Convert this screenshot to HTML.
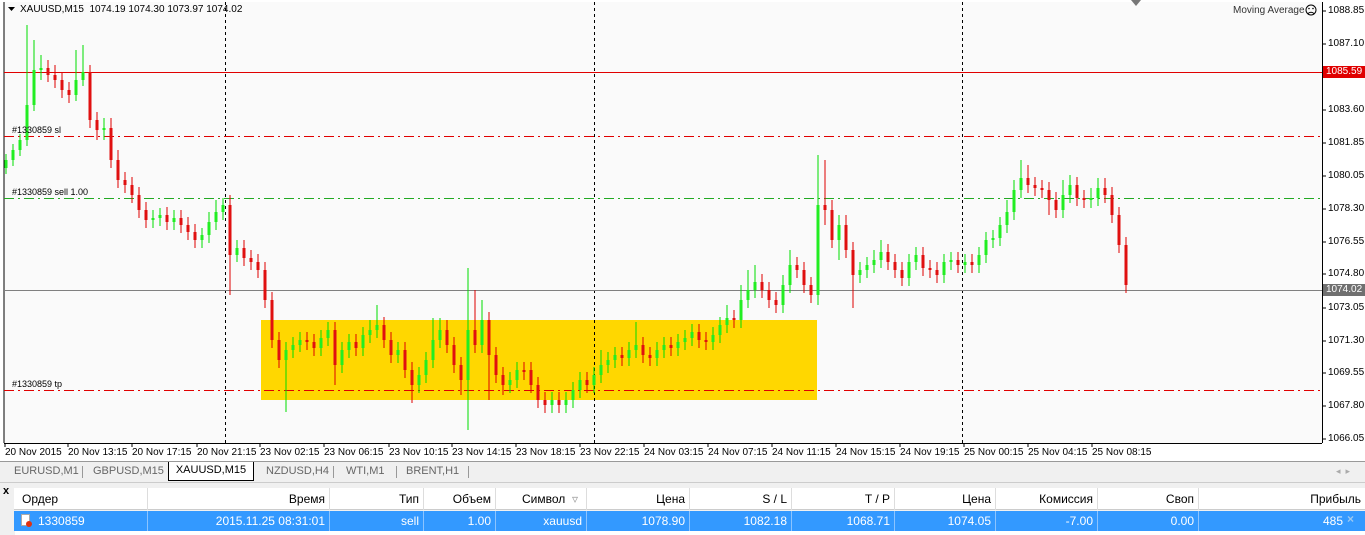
<!DOCTYPE html>
<html><head><meta charset="utf-8"><style>
body{margin:0;width:1365px;height:535px;overflow:hidden;background:#f0f0f0;font-family:"Liberation Sans",sans-serif;position:relative}
.a{position:absolute}
.pl{position:absolute;left:1328px;font-size:10px;color:#000;line-height:12px}
.tl{position:absolute;top:447px;font-size:10px;color:#000;white-space:nowrap}
.tab{position:absolute;top:463px;height:17px;font-size:11px;color:#666;line-height:17px}
.th{position:absolute;top:488px;height:22px;line-height:22px;font-size:12px;color:#000;text-align:right;border-right:1px solid #ddd;box-sizing:border-box;padding-right:4px}
.td{position:absolute;top:511px;height:20px;line-height:20px;font-size:12px;color:#fff;text-align:right;border-right:1px solid #8cc4ff;box-sizing:border-box;padding-right:4px}
</style></head><body>
<div class="a" style="left:0;top:0;width:1365px;height:461px;background:#fff"></div>
<svg class="a" style="left:0;top:0" width="1365" height="461">
<rect x="4" y="2" width="1318" height="441" fill="#fafafa"/>
<line x1="4" y1="2" x2="4" y2="443" stroke="#000"/>
<line x1="1322.5" y1="2" x2="1322.5" y2="443" stroke="#000"/>
<line x1="4" y1="443.5" x2="1322" y2="443.5" stroke="#000"/>
<rect x="261" y="320" width="556" height="80" fill="#ffd700"/>
<g stroke="#000" stroke-dasharray="3,3"><line x1="225.5" y1="2" x2="225.5" y2="443"/><line x1="594.5" y1="2" x2="594.5" y2="443"/><line x1="962.5" y1="2" x2="962.5" y2="443"/></g>
<line x1="4" y1="72.5" x2="1322" y2="72.5" stroke="#e00000"/>
<line x1="4" y1="290.5" x2="1322" y2="290.5" stroke="#808080"/>
<g stroke-dasharray="10,4,2,4"><line x1="4" y1="136.5" x2="1322" y2="136.5" stroke="#e00000"/><line x1="4" y1="390.5" x2="1322" y2="390.5" stroke="#e00000"/><line x1="4" y1="198.5" x2="1322" y2="198.5" stroke="#22aa22"/></g>
<path fill="none" stroke="#00dd00" stroke-width="1" d="M6 154V174 M13 144V166 M20 134V156 M27 25V146 M34 40V111 M41 55V80 M76 50V101 M83 45V86 M104 118V140 M153 210V228 M160 208V226 M174 210V230 M202 228V248 M209 212V243 M216 200V230 M223 198V220 M237 240V262 M286 342V412 M293 337V358 M300 332V352 M321 330V356 M328 322V346 M342 342V373 M349 334V358 M363 327V356 M370 320V343 M377 305V338 M398 342V363 M419 367V393 M426 352V383 M433 318V368 M440 318V348 M468 268V430 M482 300V353 M510 372V393 M517 362V388 M552 392V413 M566 392V413 M573 382V408 M580 372V398 M594 367V393 M601 350V383 M608 352V373 M615 347V368 M629 342V366 M636 322V358 M657 342V366 M664 337V358 M678 334V356 M685 330V350 M692 324V346 M713 327V350 M720 317V343 M727 305V333 M741 285V328 M748 270V308 M755 265V298 M783 275V313 M790 250V293 M818 155V305 M839 215V260 M860 262V283 M867 257V278 M874 250V273 M881 240V268 M909 254V286 M916 247V270 M944 254V283 M951 252V270 M965 254V273 M979 247V273 M986 232V263 M993 230V248 M1000 217V246 M1007 200V233 M1014 180V220 M1021 160V198 M1063 180V218 M1070 175V203 M1091 188V208 M1098 178V206"/>
<path fill="none" stroke="#22ee22" stroke-width="3" d="M6 160V168 M13 150V160 M20 140V150 M27 105V140 M34 70V105 M41 68V70 M76 80V95 M83 72V80 M104 128V130 M153 218V220 M160 215V218 M174 218V222 M202 235V240 M209 222V235 M216 212V222 M223 205V212 M237 248V255 M286 350V360 M293 345V350 M300 340V345 M321 338V348 M328 330V338 M342 350V365 M349 342V350 M363 335V348 M370 330V335 M377 325V330 M398 350V355 M419 375V385 M426 360V375 M433 340V360 M440 330V340 M468 330V380 M482 320V345 M510 380V385 M517 370V380 M552 400V405 M566 400V405 M573 390V400 M580 380V390 M594 375V385 M601 365V375 M608 360V365 M615 355V360 M629 350V358 M636 345V350 M657 350V358 M664 345V350 M678 342V348 M685 338V342 M692 332V338 M713 335V342 M720 325V335 M727 318V325 M741 300V320 M748 290V300 M755 282V290 M783 285V305 M790 265V285 M818 205V295 M839 225V240 M860 270V275 M867 265V270 M874 260V265 M881 252V260 M909 262V278 M916 255V262 M944 262V275 M951 260V262 M965 262V265 M979 255V265 M986 240V255 M993 238V240 M1000 225V238 M1007 212V225 M1014 190V212 M1021 178V190 M1063 195V210 M1070 185V195 M1091 198V200 M1098 188V198"/>
<path fill="none" stroke="#dd0000" stroke-width="1" d="M48 60V82 M55 65V88 M62 72V98 M69 82V103 M90 65V128 M97 112V140 M111 118V168 M118 150V188 M125 172V193 M132 177V203 M139 187V218 M146 202V228 M167 207V230 M181 210V233 M188 217V240 M195 224V248 M230 195V295 M244 240V266 M251 250V270 M258 254V278 M265 262V308 M272 292V348 M279 332V368 M307 332V350 M314 334V356 M335 322V385 M356 334V356 M384 317V348 M391 332V363 M405 342V378 M412 362V403 M447 320V353 M454 337V373 M461 357V395 M475 290V353 M489 312V400 M496 347V383 M503 367V395 M524 362V380 M531 362V393 M538 377V408 M545 392V413 M559 392V413 M587 372V393 M622 347V366 M643 337V363 M650 347V366 M671 337V356 M699 324V348 M706 332V350 M734 310V328 M762 274V298 M769 282V308 M776 292V313 M797 257V278 M804 262V293 M811 277V303 M825 160V225 M832 200V248 M846 215V258 M853 242V308 M888 244V270 M895 254V278 M902 262V286 M923 247V276 M930 260V278 M937 262V283 M958 252V273 M972 254V273 M1028 165V193 M1035 177V196 M1042 180V198 M1049 182V215 M1056 192V218 M1077 177V206 M1084 190V208 M1105 178V203 M1112 187V223 M1119 207V253 M1126 237V293"/>
<path fill="none" stroke="#e01010" stroke-width="3" d="M48 68V75 M55 75V80 M62 80V90 M69 90V95 M90 72V120 M97 120V130 M111 128V160 M118 160V180 M125 180V185 M132 185V195 M139 195V210 M146 210V220 M167 215V222 M181 218V225 M188 225V232 M195 232V240 M230 205V255 M244 248V258 M251 258V262 M258 262V270 M265 270V300 M272 300V340 M279 340V360 M307 340V342 M314 342V348 M335 330V365 M356 342V348 M384 325V340 M391 340V355 M405 350V370 M412 370V385 M447 330V345 M454 345V365 M461 365V380 M475 330V345 M489 320V355 M496 355V375 M503 375V385 M524 370V372 M531 370V385 M538 385V400 M545 400V405 M559 400V405 M587 380V385 M622 355V358 M643 345V355 M650 355V358 M671 345V348 M699 332V340 M706 340V342 M734 318V320 M762 282V290 M769 290V300 M776 300V305 M797 265V270 M804 270V285 M811 285V295 M825 205V210 M832 210V240 M846 225V250 M853 250V275 M888 252V262 M895 262V270 M902 270V278 M923 255V268 M930 268V270 M937 270V275 M958 260V265 M972 262V265 M1028 178V185 M1035 185V188 M1042 188V190 M1049 190V200 M1056 200V210 M1077 185V198 M1084 198V200 M1105 188V195 M1112 195V215 M1119 215V245 M1126 245V285"/>
<g stroke="#000"><path d="M1322 11h4M1322 44h4M1322 77h4M1322 110h4M1322 143h4M1322 176h4M1322 209h4M1322 242h4M1322 274h4M1322 308h4M1322 341h4M1322 373h4M1322 406h4M1322 439h4"/>
<path d="M5 443v4M68 443v4M132 443v4M197 443v4M260 443v4M324 443v4M389 443v4M452 443v4M516 443v4M580 443v4M644 443v4M708 443v4M772 443v4M836 443v4M900 443v4M964 443v4M1028 443v4M1092 443v4"/></g>
<path d="M8 7h7l-3.5 4z" fill="#000"/>
<path d="M1131 0h10l-5 6z" fill="#777"/>
<circle cx="1311" cy="10" r="5" fill="none" stroke="#000"/>
<circle cx="1309" cy="8.5" r="0.8" fill="#000"/><circle cx="1313" cy="8.5" r="0.8" fill="#000"/>
<path d="M1308 13.5q3 -2.5 6 0" fill="none" stroke="#000"/>
</svg>
<div class="a" style="left:20px;top:4px;font-size:10px">XAUUSD,M15&nbsp; 1074.19 1074.30 1073.97 1074.02</div>
<div class="a" style="left:1233px;top:5px;font-size:10px;color:#333">Moving Average</div>
<div class="a" style="left:12px;top:125px;font-size:9px">#1330859 sl</div>
<div class="a" style="left:12px;top:187px;font-size:9px">#1330859 sell 1.00</div>
<div class="a" style="left:12px;top:379px;font-size:9px">#1330859 tp</div>
<div class="pl" style="top:5px">1088.85</div><div class="pl" style="top:38px">1087.10</div><div class="pl" style="top:104px">1083.60</div><div class="pl" style="top:137px">1081.85</div><div class="pl" style="top:170px">1080.05</div><div class="pl" style="top:203px">1078.30</div><div class="pl" style="top:236px">1076.55</div><div class="pl" style="top:268px">1074.80</div><div class="pl" style="top:302px">1073.05</div><div class="pl" style="top:335px">1071.30</div><div class="pl" style="top:367px">1069.55</div><div class="pl" style="top:400px">1067.80</div><div class="pl" style="top:433px">1066.05</div>
<div class="a" style="left:1323px;top:66px;width:40px;height:12px;background:#e00000;color:#fff;font-size:10px;line-height:12px;padding-left:3px">1085.59</div>
<div class="a" style="left:1323px;top:284px;width:40px;height:12px;background:#707070;color:#fff;font-size:10px;line-height:12px;padding-left:3px">1074.02</div>
<div class="tl" style="left:5px">20 Nov 2015</div><div class="tl" style="left:68px">20 Nov 13:15</div><div class="tl" style="left:132px">20 Nov 17:15</div><div class="tl" style="left:197px">20 Nov 21:15</div><div class="tl" style="left:260px">23 Nov 02:15</div><div class="tl" style="left:324px">23 Nov 06:15</div><div class="tl" style="left:389px">23 Nov 10:15</div><div class="tl" style="left:452px">23 Nov 14:15</div><div class="tl" style="left:516px">23 Nov 18:15</div><div class="tl" style="left:580px">23 Nov 22:15</div><div class="tl" style="left:644px">24 Nov 03:15</div><div class="tl" style="left:708px">24 Nov 07:15</div><div class="tl" style="left:772px">24 Nov 11:15</div><div class="tl" style="left:836px">24 Nov 15:15</div><div class="tl" style="left:900px">24 Nov 19:15</div><div class="tl" style="left:964px">25 Nov 00:15</div><div class="tl" style="left:1028px">25 Nov 04:15</div><div class="tl" style="left:1092px">25 Nov 08:15</div>
<div class="a" style="left:0;top:461px;width:1365px;height:1px;background:#999"></div>
<div class="tab" style="left:14px">EURUSD,M1</div><div class="a" style="left:82px;top:466px;width:1px;height:12px;background:#999"></div>
<div class="tab" style="left:93px">GBPUSD,M15</div>
<div class="a" style="left:168px;top:462px;width:86px;height:19px;background:#fff;border:1px solid #000;border-top:none;box-sizing:border-box;font-size:11px;line-height:17px;text-align:center">XAUUSD,M15</div>
<div class="tab" style="left:266px">NZDUSD,H4</div><div class="a" style="left:333px;top:466px;width:1px;height:12px;background:#999"></div>
<div class="tab" style="left:346px">WTI,M1</div><div class="a" style="left:396px;top:466px;width:1px;height:12px;background:#999"></div>
<div class="tab" style="left:406px">BRENT,H1</div><div class="a" style="left:468px;top:466px;width:1px;height:12px;background:#999"></div>
<div class="tab" style="left:1336px;color:#aaa;font-size:9px">◂ &nbsp;▸</div>
<div class="a" style="left:0;top:482px;width:1365px;height:1px;background:#ccc"></div>
<div class="a" style="left:3px;top:485px;font-size:11px;font-weight:bold">x</div>
<div class="a" style="left:14px;top:488px;width:1351px;height:22px;background:#fff;border-bottom:1px solid #ccc;box-sizing:border-box"></div>
<div class="th" style="left:14px;width:134px;text-align:left;padding-left:8px">Ордер</div><div class="th" style="left:148px;width:182px">Время</div><div class="th" style="left:330px;width:94px">Тип</div><div class="th" style="left:424px;width:72px">Объем</div><div class="th" style="left:496px;width:91px;padding-right:8px">Символ &nbsp;<span style="color:#999">▿</span></div><div class="th" style="left:587px;width:103px">Цена</div><div class="th" style="left:690px;width:102px">S / L</div><div class="th" style="left:792px;width:103px">T / P</div><div class="th" style="left:895px;width:101px">Цена</div><div class="th" style="left:996px;width:102px">Комиссия</div><div class="th" style="left:1098px;width:101px">Своп</div><div class="th" style="left:1199px;width:166px;border:none">Прибыль</div>
<div class="a" style="left:14px;top:511px;width:1351px;height:20px;background:#3399ff"></div>
<div class="a" style="left:15px;top:531px;width:1350px;height:4px;background:#fff"></div>
<div class="a" style="left:21px;top:514px;width:9px;height:12px;background:#fff;border:1px solid #aaa;box-sizing:border-box"></div>
<div class="a" style="left:26px;top:521px;width:6px;height:6px;background:#e03010;border-radius:3px"></div>
<div class="td" style="left:14px;width:134px;text-align:left;padding-left:24px">1330859</div><div class="td" style="left:148px;width:182px">2015.11.25 08:31:01</div><div class="td" style="left:330px;width:94px">sell</div><div class="td" style="left:424px;width:72px">1.00</div><div class="td" style="left:496px;width:91px">xauusd</div><div class="td" style="left:587px;width:103px">1078.90</div><div class="td" style="left:690px;width:102px">1082.18</div><div class="td" style="left:792px;width:103px">1068.71</div><div class="td" style="left:895px;width:101px">1074.05</div><div class="td" style="left:996px;width:102px">-7.00</div><div class="td" style="left:1098px;width:101px">0.00</div><div class="td" style="left:1199px;width:166px;border:none;padding-right:22px">485</div>
<div class="a" style="left:1347px;top:512px;font-size:12px;color:#9cc8f0;font-weight:bold">×</div>
</body></html>
